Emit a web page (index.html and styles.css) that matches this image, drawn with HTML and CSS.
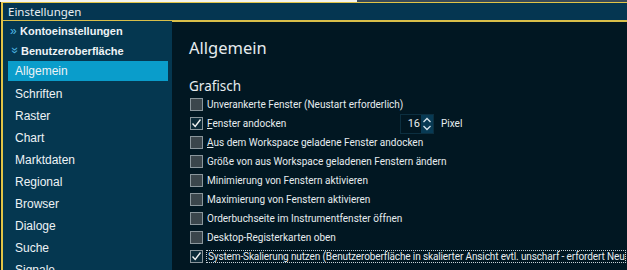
FILE: index.html
```html
<!DOCTYPE html>
<html lang="de">
<head>
    <meta charset="UTF-8">
    <title>Einstellungen</title>
    <link rel="stylesheet" href="styles.css">
</head>
<body>
    <div class="topstrip"><span class="strip-light"></span><span class="strip-dark"></span></div>
    <div class="window">
        <div class="titlebar">Einstellungen</div>
        <div class="main">
            <div class="sidebar">
                <div class="group"><span class="chev">&raquo;</span>Kontoeinstellungen</div>
                <div class="group"><span class="chev down">&raquo;</span>Benutzeroberfläche</div>
                <div class="item selected">Allgemein</div>
                <div class="item">Schriften</div>
                <div class="item">Raster</div>
                <div class="item">Chart</div>
                <div class="item">Marktdaten</div>
                <div class="item">Regional</div>
                <div class="item">Browser</div>
                <div class="item">Dialoge</div>
                <div class="item">Suche</div>
                <div class="item">Signale</div>
            </div>
            <div class="content">
                <h1>Allgemein</h1>
                <h2>Grafisch</h2>
                <div class="row"><span class="box"></span><span class="label">Unverankerte Fenster (Neustart erforderlich)</span></div>
                <div class="row">
                    <span class="box checked"><svg width="11" height="11" viewBox="0 0 11 11"><path d="M1.5 5.5 L4.2 8.5 L9.5 1.5" fill="none" stroke="#f2f2f2" stroke-width="1.4"/></svg></span>
                    <span class="label label-dock"><u>F</u>enster andocken</span>
                    <span class="spin">
                        <span class="spin-value">16</span>
                        <span class="spin-btns">
                            <svg width="12" height="18" viewBox="0 0 12 18"><path d="M2.5 7 L6 3.5 L9.5 7" fill="none" stroke="#d8e6ee" stroke-width="1.3"/><path d="M2.5 11 L6 14.5 L9.5 11" fill="none" stroke="#d8e6ee" stroke-width="1.3"/></svg>
                        </span>
                    </span>
                    <span class="label">Pixel</span>
                </div>
                <div class="row"><span class="box"></span><span class="label"><u>A</u>us dem Workspace geladene Fenster andocken</span></div>
                <div class="row"><span class="box"></span><span class="label">Größe von aus Workspace geladenen Fenstern ändern</span></div>
                <div class="row"><span class="box"></span><span class="label">Minimierung von Fenstern aktivieren</span></div>
                <div class="row"><span class="box"></span><span class="label">Maximierung von Fenstern aktivieren</span></div>
                <div class="row"><span class="box"></span><span class="label">Orderbuchseite im Instrumentfenster öffnen</span></div>
                <div class="row"><span class="box"></span><span class="label">Desktop-Registerkarten oben</span></div>
                <div class="row">
                    <span class="box checked"><svg width="11" height="11" viewBox="0 0 11 11"><path d="M1.5 5.5 L4.2 8.5 L9.5 1.5" fill="none" stroke="#f2f2f2" stroke-width="1.4"/></svg></span>
                    <span class="label focus">System-Skalierung nutzen (Benutzeroberfläche in skalierter Ansicht evtl. unscharf - erfordert Neu</span>
                </div>
            </div>
        </div>
    </div>
</body>
</html>
```

FILE: styles.css
```css
body {
    margin: 0;
    width: 627px;
    height: 270px;
    overflow: hidden;
    background-color: #011722;
    font-family: "Noto Sans", "Open Sans", sans-serif;
}
.topstrip {
    display: flex;
    height: 2px;
}
.strip-light {
    width: 357px;
    background-color: #f4f4f0;
}
.strip-dark {
    flex: 1;
    background-color: #3a4a58;
}
.window {
    margin-left: 1px;
    border-top: 1px solid #e2c447;
    border-left: 2px solid #e2c447;
    height: 270px;
}
.titlebar {
    height: 17px;
    background-color: #053651;
    border-bottom: 2px solid #d9bf4a;
    color: #e8eef2;
    font-size: 11.5px;
    line-height: 17px;
    padding-left: 5px;
}
.main {
    display: flex;
    height: 250px;
}
.sidebar {
    width: 169px;
    flex-shrink: 0;
    background-color: #053750;
    color: #eef3f6;
    font-family: "Liberation Sans", Arial, sans-serif;
    font-size: 12px;
    margin-top: -1px;
}
.group {
    height: 20px;
    line-height: 20px;
    font-weight: bold;
    padding-left: 7px;
    font-size: 11px;
}
.chev {
    display: inline-block;
    width: 10px;
    color: #4fb8e6;
    font-weight: normal;
    font-size: 12px;
}
.chev.down {
    transform: rotate(90deg);
    width: 8px;
    margin-right: 2px;
    margin-left: 1px;
}
.item {
    height: 22px;
    line-height: 22px;
    padding-left: 12px;
}
.item.selected {
    margin: 0 4px 2px 5px;
    padding-left: 7px;
    height: 20px;
    line-height: 20px;
    background-color: #0a9dcb;
}
.content {
    flex: 1;
    min-width: 0;
    padding-left: 17px;
    color: #e6ecef;
}
h1 {
    margin: 14px 0 0;
    font-size: 16.5px;
    font-weight: normal;
    line-height: 24px;
}
h2 {
    margin: 17px 0 0;
    font-size: 13.5px;
    font-weight: normal;
    line-height: 18px;
}
.row {
    display: flex;
    align-items: center;
    height: 19px;
    font-family: Roboto, "Liberation Sans", sans-serif;
    font-size: 10px;
}
.box {
    width: 11px;
    height: 11px;
    border: 1px solid #8a969c;
    background-color: #3b464c;
    margin: 0 4px 0 1px;
    flex-shrink: 0;
}
.box.checked {
    background-color: #0c2a38;
}
.box svg {
    display: block;
}
.label {
    white-space: nowrap;
}
.label-dock {
    width: 193px;
}
.spin {
    display: flex;
    height: 18px;
    background-color: #011722;
    border: 1px solid #0c2f40;
    margin-right: 7px;
}
.spin-value {
    width: 19px;
    text-align: right;
    line-height: 18px;
    font-size: 11px;
    padding-right: 1px;
}
.spin-btns {
    background-color: #083a54;
    width: 12px;
}
.spin-btns svg {
    display: block;
}
.focus {
    outline: 1px dotted #c8d2d8;
    padding-left: 1px;
    letter-spacing: -0.12px;
}
```
